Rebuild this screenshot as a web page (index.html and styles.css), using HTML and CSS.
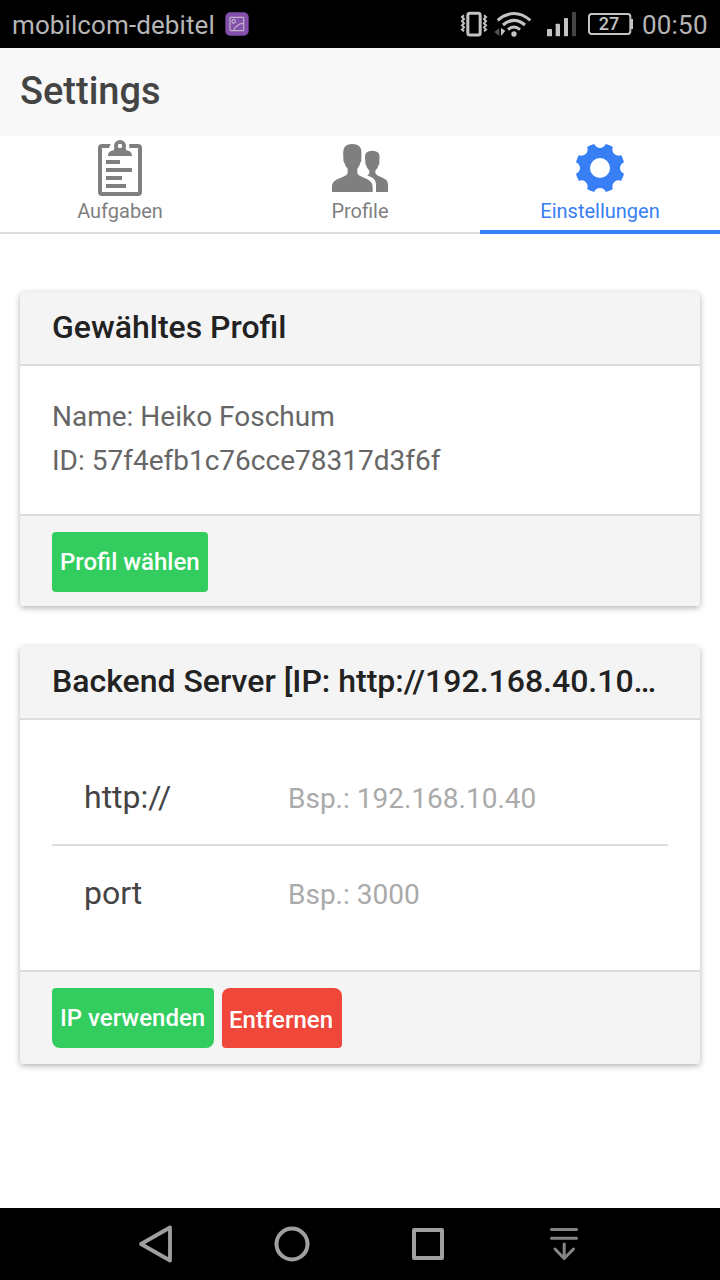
FILE: index.html
```html
<!DOCTYPE html>
<html lang="de">
<head>
<meta charset="utf-8">
<title>Settings</title>
<link rel="stylesheet" href="styles.css">
</head>
<body>
<div class="screen">
  <div class="status">
    <span class="carrier">mobilcom-debitel</span>
    <svg class="app-badge" width="24" height="24" viewBox="0 0 72 72">
      <rect x="1" y="1" width="70" height="70" rx="15" fill="#8350ae"/>
      <g fill="none" stroke="#c3b3c6" stroke-width="3.500">
        <rect x="15" y="16" width="41" height="40" rx="2"/>
        <ellipse cx="26" cy="28" rx="5" ry="6"/>
        <path d="M27 56C28 46 31 43 38 42C40 36 46 34 56 34"/>
      </g>
    </svg>
    <svg class="signals" width="185" height="48" viewBox="0 0 555 144">
      <g fill="none" stroke="#c3c3c3">
        <rect x="53.500" y="40" width="37" height="65" rx="6" stroke-width="9"/>
        <path d="M42 46l-6 5 6 6-6 6 6 7-6 6 6 6-6 7 6 5M102 46l6 5-6 6 6 6-6 7 6 6-6 6 6 7-6 5" stroke-width="6"/>
        <path d="M143 61Q192 20 241 61" stroke-width="9"/>
        <path d="M159 75Q192 47 225 75" stroke-width="9"/>
        <path d="M174 89Q192 73 210 89" stroke-width="9"/>
        <rect x="417" y="42" width="124" height="60" rx="8" stroke-width="6"/>
      </g>
      <g fill="#c3c3c3">
        <circle cx="192" cy="102" r="8"/>
        <path d="M153 84v24l13-16z"/>
        <rect x="291" y="87" width="15" height="22" rx="2"/>
        <rect x="317" y="71" width="13" height="38" rx="2"/>
        <rect x="342" y="54" width="12" height="55" rx="2"/>
        <path d="M543 57h6v30h-6z"/>
      </g>
      <path d="M148 84v24l-15-12z" fill="#555"/>
      <rect x="366" y="36" width="12" height="73" rx="2" fill="#444"/>
      <text class="charge" x="477" y="90" text-anchor="middle">27</text>
    </svg>
    <span class="clock">00:50</span>
  </div>

  <header class="title-bar">Settings</header>

  <nav class="tabs">
    <a class="tab">
      <svg class="tab-icon" width="44" height="56" viewBox="0 0 44 56" fill="#7f7f7f">
        <path d="M12.700 4H4Q0 4 0 8V52Q0 56 4 56H40Q44 56 44 52V8Q44 4 40 4H31.300V8H40V52H4V8H11Z"/>
        <path fill-rule="evenodd" d="M10 16C10 12.500 12 11 15 10.500C17 10 16 6 16 6A6 6 0 0 1 28 6C28 6 27 10 29 10.500C32 11 34 12.500 34 16ZM22 3.800a2.200 2.200 0 1 0 0 4.400a2.200 2.200 0 1 0 0-4.400Z"/>
        <path d="M8 20h14v4H8zM8 28h26v4H8zM8 36h16v4H8zM8 44h20v4H8z"/>
      </svg>
      <span>Aufgaben</span>
    </a>
    <a class="tab">
      <svg class="tab-icon people" width="56" height="48" viewBox="66 42 168 144" fill="#7f7f7f">
        <path d="M66 186V172C66 158 73 152 82 148L98 141Q111 136 113 130V116Q106 110 103 98Q99 94 100 83Q98 60 104 51Q111 42 127 42Q143 42 150 51Q156 60 154 83Q155 94 151 98Q148 110 142 116V130Q144 136 157 141L172 148Q188 156 188 172V186Z"/>
        <path d="M198 186V166Q198 150 187 143L172 136Q177 133 178 129V122Q171 116 168 105Q165 102 166 93Q163 77 168 69Q175 62 187 62Q200 62 206 70Q210 77 208 93Q209 102 206 105Q203 116 196 122V129Q197 133 204 137Q220 144 226 148Q234 153 234 168V186Z"/>
      </svg>
      <span>Profile</span>
    </a>
    <a class="tab active">
      <svg class="tab-icon gear" width="48" height="48" viewBox="64 64 384 384" fill="#387ef5">
        <path fill-rule="evenodd" d="M416.349 256.046c0-21.001 13.143-38.949 31.651-46.062a196.302 196.302 0 0 0-23.664-57.139 49.423 49.423 0 0 1-20.082 4.254c-12.621 0-25.238-4.811-34.871-14.442-14.863-14.863-18.248-36.846-10.180-54.970A196.234 196.234 0 0 0 302.074 64C294.971 82.529 277.027 95.690 256 95.690c-21.025 0-38.969-13.161-46.073-31.690a196.243 196.243 0 0 0-57.128 23.688c8.068 18.122 4.683 40.104-10.181 54.970-9.631 9.631-22.250 14.443-34.871 14.443a49.429 49.429 0 0 1-20.083-4.255A196.273 196.273 0 0 0 64 209.984c18.509 7.112 31.652 25.061 31.652 46.062 0 21.008-13.132 38.936-31.630 46.054a196.318 196.318 0 0 0 23.692 57.128 49.428 49.428 0 0 1 20.032-4.232c12.622 0 25.239 4.812 34.871 14.443 14.841 14.841 18.239 36.781 10.215 54.889a196.257 196.257 0 0 0 57.130 23.673c7.128-18.479 25.046-31.596 46.038-31.596 20.992 0 38.910 13.115 46.037 31.596a196.234 196.234 0 0 0 57.132-23.675c-8.023-18.106-4.626-40.046 10.216-54.887 9.629-9.632 22.248-14.444 34.868-14.444 6.836 0 13.670 1.411 20.033 4.233a196.318 196.318 0 0 0 23.692-57.128c-18.498-7.119-31.629-25.048-31.629-46.054zM256 336a80 80 0 1 1 0-160a80 80 0 1 1 0 160z"/>
      </svg>
      <span>Einstellungen</span>
    </a>
  </nav>

  <main class="content">
    <section class="card">
      <h2 class="card-head">Gewähltes Profil</h2>
      <div class="card-body profile">
        <div>Name: Heiko Foschum</div>
        <div>ID: 57f4efb1c76cce78317d3f6f</div>
      </div>
      <div class="card-foot">
        <button class="btn choose">Profil wählen</button>
      </div>
    </section>

    <section class="card">
      <h2 class="card-head">Backend Server [IP: http://192.168.40.10…</h2>
      <div class="card-body fields">
        <label class="field"><span class="label">http://</span><span class="hint">Bsp.: 192.168.10.40</span></label>
        <label class="field"><span class="label">port</span><span class="hint">Bsp.: 3000</span></label>
      </div>
      <div class="card-foot server-foot">
        <button class="btn use">IP verwenden</button>
        <button class="btn remove">Entfernen</button>
      </div>
    </section>
  </main>

  <footer class="navbar">
    <svg width="480" height="72" viewBox="0 0 480 72" fill="none" stroke="#a0a0a0" stroke-linejoin="round" stroke-linecap="round">
      <path d="M21 36L50 19.500V52.500Z" stroke-width="3.800"/>
      <circle cx="172" cy="36" r="15.500" stroke-width="4"/>
      <rect x="294" y="22" width="28" height="28" stroke-width="4"/>
      <path d="M431.500 21.500H456.500M431.500 30.300H456.500M444.200 36V50M435 41L444.200 50.500L453.500 41" stroke="#858585" stroke-width="3"/>
    </svg>
  </footer>
</div>
</body>
</html>
```
FILE: styles.css
```css
* { box-sizing: border-box; }
body { margin: 0; background: #fff; font-family: Roboto, "Liberation Sans", sans-serif; }
.screen { width: 720px; height: 1280px; display: flex; flex-direction: column; overflow: hidden; }

.status { height: 48px; flex: none; background: #000; color: #b5b5b5; display: flex; align-items: center; padding-left: 12px; }
.carrier { width: 213px; font-size: 26px; line-height: 48px; padding-top: 2px; letter-spacing: .1px; white-space: nowrap; }
.signals { margin-left: 201px; }
.charge { font-family: Roboto, sans-serif; font-size: 54px; font-weight: 500; fill: #c3c3c3; }
.clock { margin-left: 7px; font-size: 26px; line-height: 48px; padding-top: 2px; letter-spacing: .2px; }

.title-bar { height: 88px; flex: none; background: #f8f8f8; color: #444; padding-left: 20px; font-size: 38px; font-weight: 500; line-height: 86px; }

.tabs { height: 98px; flex: none; display: grid; grid-template-columns: repeat(3, 1fr); }
.tab { display: flex; flex-direction: column; align-items: center; padding-top: 4px; color: #7f7f7f; border-bottom: 2px solid #ddd; font-size: 20px; line-height: 30px; }
.tab.active { color: #387ef5; border-bottom: 4px solid #387ef5; }
.tab-icon { flex: none; }
.people, .gear { margin: 4px 0; }

.content { flex: 1; padding: 58px 20px 0; }
.card { background: #fff; border-radius: 4px; box-shadow: 0 2px 6px rgba(0, 0, 0, .3); margin-bottom: 40px; overflow: hidden; }
.card-head { margin: 0; height: 74px; padding: 0 32px; background: #f4f4f4; border-bottom: 2px solid #ddd; color: #222; font-size: 32px; font-weight: 500; line-height: 71px; white-space: nowrap; }
.card-body { color: #666; font-size: 28px; line-height: 44px; }
.profile { height: 148px; padding: 29px 32px 0; }
.card-foot { height: 92px; padding: 16px 32px 0; background: #f4f4f4; border-top: 2px solid #ddd; display: flex; gap: 8px; }
.btn { height: 60px; padding: 0 0 0 8px; border: 0; color: #fff; font-family: inherit; font-size: 24px; font-weight: 500; line-height: 60px; text-align: left; white-space: nowrap; }
.choose { width: 156px; background: #33cd5f; border-radius: 4px; }
.use { width: 162px; background: #33cd5f; border-radius: 4px 4px 8px 8px; }
.remove { width: 120px; background: #ef473a; border-radius: 8px 8px 4px 4px; padding: 4px 0 0 7px; line-height: 56px; }

.fields { height: 250px; padding: 30px 32px 0; }
.field { height: 96px; display: flex; align-items: center; padding-left: 32px; }
.field:first-child { border-bottom: 2px solid #ddd; padding-top: 1px; }
.field:first-child .label { padding-bottom: 1px; }
.label { width: 204px; color: #444; font-size: 32px; padding-bottom: 2px; }
.hint { color: #aaa; padding-top: 2px; }
.server-foot { height: 94px; }

.navbar { height: 72px; flex: none; background: #000; display: flex; justify-content: center; }
```
